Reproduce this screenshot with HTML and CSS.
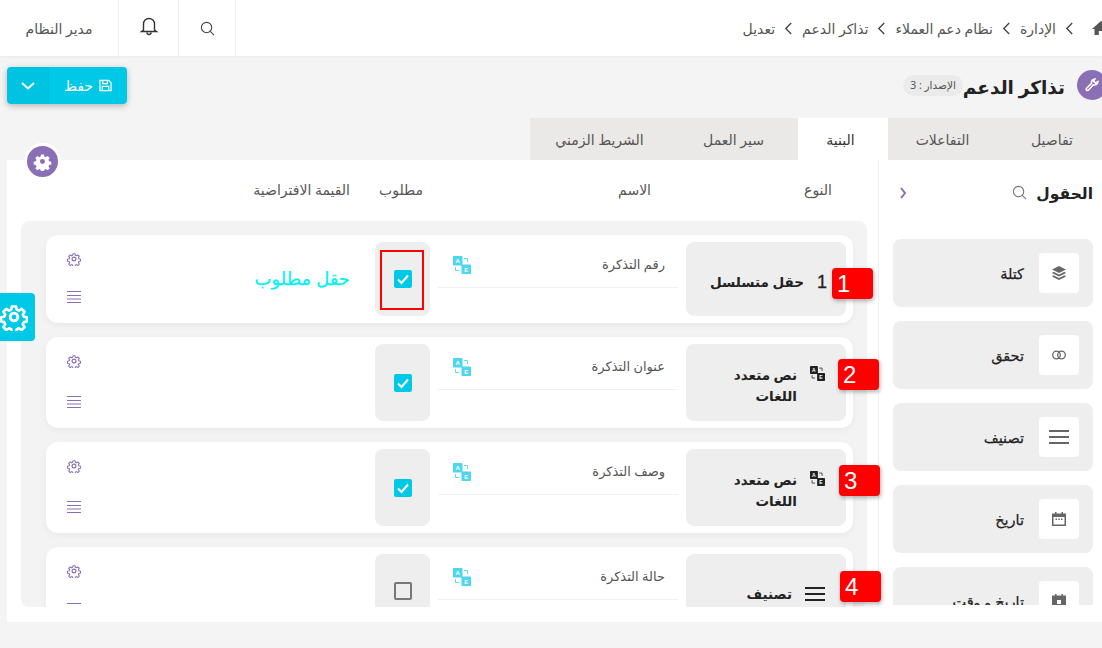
FILE: index.html
```html
<!DOCTYPE html>
<html lang="ar" dir="rtl">
<head>
<meta charset="utf-8">
<title>تذاكر الدعم</title>
<link rel="stylesheet" href="styles.css">
</head>
<body>
<svg class="defs" aria-hidden="true">
  <symbol id="i-gear" viewBox="0 0 24 24"><path fill="none" stroke="currentColor" stroke-linejoin="round" d="M10 2h4l.6 3 2.100.9 2.600-1.700 2.800 2.800-1.700 2.600.9 2.100 3 .6v4l-3 .6-.9 2.100 1.700 2.600-2.800 2.800-2.600-1.700-2.100.9-.6 3h-4l-.6-3-2.100-.9-2.600 1.700-2.800-2.800 1.700-2.600-.9-2.100-3-.6v-4l3-.6.9-2.100-1.700-2.600 2.800-2.800 2.600 1.700 2.100-.9z" transform="translate(1.200 1.200) scale(.9)"/><circle cx="12" cy="12" r="3.300" fill="none" stroke="currentColor"/></symbol>
  <symbol id="i-gear-solid" viewBox="0 0 24 24"><path fill="currentColor" fill-rule="evenodd" d="M10 2h4l.6 3 2.100.9 2.600-1.700 2.800 2.800-1.700 2.600.9 2.100 3 .6v4l-3 .6-.9 2.100 1.700 2.600-2.800 2.800-2.600-1.700-2.100.9-.6 3h-4l-.6-3-2.100-.9-2.600 1.700-2.800-2.800 1.700-2.600-.9-2.100-3-.6v-4l3-.6.9-2.100-1.700-2.600 2.800-2.800 2.600 1.700 2.100-.9zM12 8.500a3.500 3.500 0 1 0 0 7 3.500 3.500 0 0 0 0-7z" transform="translate(1.200 1.200) scale(.9)"/></symbol>
  <symbol id="i-lines" viewBox="0 0 14 12"><path stroke="currentColor" stroke-width="1" fill="none" d="M0 .5h14M0 4.500h14M0 8h14M0 11.500h14"/></symbol>
  <symbol id="i-bars" viewBox="0 0 20 16"><path stroke="currentColor" stroke-width="2.200" fill="none" d="M0 2h20M0 8h20M0 14h20"/></symbol>
  <symbol id="i-check" viewBox="0 0 18 18"><path fill="none" stroke="#fff" stroke-width="2" d="M4 9.500l3.500 3.500L14 5.500"/></symbol>
  <symbol id="i-search" viewBox="0 0 16 16"><circle cx="7" cy="7" r="5.500" fill="none" stroke="currentColor" stroke-width="1.200"/><path d="M11 11l4 4" stroke="currentColor" stroke-width="1.200"/></symbol>
  <symbol id="i-chev" viewBox="0 0 10 16"><path d="M2 2l6 6-6 6" fill="none" stroke="currentColor" stroke-width="1.500"/></symbol>
  <symbol id="i-trans" viewBox="0 0 18 18"><rect x="0" y="0" width="9.500" height="9.500" rx=".8" fill="currentColor"/><rect x="8.500" y="8.500" width="9.500" height="9.500" rx=".8" fill="currentColor"/><text x="4.700" y="7" class="svg-letter" text-anchor="middle">A</text><text x="13.200" y="15.500" class="svg-letter" text-anchor="middle">E</text><path d="M11 2.500h3.500V6M2.500 11v3.500H6" fill="none" stroke="currentColor" stroke-width=".9"/></symbol>
</svg>

<header class="topbar">
  <nav class="crumbs">
    <svg class="home" viewBox="0 0 18 14"><path fill="#555" d="M9 0l3 2.600V1h2.500v3.800L18 8h-2.500v6h-4.300v-4H6.800v4H2.500V8H0z"/></svg>
    <svg class="chev"><use href="#i-chev"/></svg><span>الإدارة</span>
    <svg class="chev"><use href="#i-chev"/></svg><span>نظام دعم العملاء</span>
    <svg class="chev"><use href="#i-chev"/></svg><span>تذاكر الدعم</span>
    <svg class="chev"><use href="#i-chev"/></svg><span>تعديل</span>
  </nav>
  <div class="tools">
    <div class="tool tool-search"><svg class="ic16"><use href="#i-search"/></svg></div>
    <div class="tool tool-bell"><svg class="bell" viewBox="0 0 20 20"><path fill="none" stroke="#333" stroke-width="1.400" d="M4.500 14V8a5.500 5.500 0 0 1 11 0v6l2 1.500h-15zM8 16.500a2 2 0 0 0 4 0"/></svg></div>
    <div class="tool tool-user">مدير النظام</div>
  </div>
</header>

<section class="pagehead">
  <div class="title-wrap">
    <span class="title-icon"><svg viewBox="0 0 16 16"><path fill="none" stroke="#fff" stroke-width="1.500" d="M14 4.500a3.500 3.500 0 0 1-4.700 3.300L4.500 13a1.300 1.300 0 0 1-2-1.800l5-4.800A3.500 3.500 0 0 1 11 2L9.500 4.300l2 1.700z"/></svg></span>
    <h1>تذاكر الدعم</h1>
    <span class="version">الإصدار : 3</span>
  </div>
  <div class="save">
    <button class="save-main"><svg viewBox="0 0 14 14"><path fill="none" stroke="#fff" stroke-width="1.300" d="M1 1.500h9.500L13 4v8.500H1zM4 1.500v3.500h5V1.500M3.500 12.500V8h7v4.500"/></svg>حفظ</button>
    <button class="save-more"><svg viewBox="0 0 14 8"><path fill="none" stroke="#fff" stroke-width="2" d="M1 1l6 5.500L13 1"/></svg></button>
  </div>
</section>

<div class="tabs">
  <a class="tab tab-a">تفاصيل</a>
  <a class="tab tab-b">التفاعلات</a>
  <a class="tab tab-c active">البنية</a>
  <a class="tab tab-d">سير العمل</a>
  <a class="tab tab-e">الشريط الزمني</a>
</div>

<main class="panel">
  <aside class="fields">
    <div class="fields-head">
      <h2>الحقول</h2>
      <svg class="ic15"><use href="#i-search"/></svg>
      <svg class="fold" viewBox="0 0 8 12"><path d="M2 1l4 5-4 5" fill="none" stroke="#8b6fb5" stroke-width="2"/></svg>
    </div>
    <div class="field"><span class="field-ic"><svg viewBox="0 0 14 14"><path fill="#666" d="M7 0l7 3.500L7 7 0 3.500zM1.500 5.800L7 8.500l5.500-2.700L14 7l-7 3.500L0 7zM1.500 9.300L7 12l5.500-2.700L14 10.500 7 14 0 10.500z"/></svg></span>كتلة</div>
    <div class="field"><span class="field-ic"><svg viewBox="0 0 14 10"><circle cx="4.500" cy="5" r="3.800" fill="none" stroke="#666" stroke-width="1.300"/><circle cx="9.500" cy="5" r="3.800" fill="none" stroke="#666" stroke-width="1.300"/></svg></span>تحقق</div>
    <div class="field"><span class="field-ic"><svg class="wide" viewBox="0 0 20 16"><use href="#i-bars"/></svg></span>تصنيف</div>
    <div class="field"><span class="field-ic"><svg viewBox="0 0 14 14"><path fill="#666" fill-rule="evenodd" d="M3 0h1.500v1.500h5V0H11v1.500h3V14H0V1.500h3zM1.500 5v7.500h11V5z"/><path fill="#666" d="M3.500 6.500h1.500V8H3.500zM6.300 6.500h1.500V8H6.300zM9 6.500h1.500V8H9z"/></svg></span>تاريخ</div>
    <div class="field"><span class="field-ic"><svg viewBox="0 0 14 14"><path fill="#666" d="M3 0h1.500v1.500h5V0H11v1.500h3V14H0V1.500h3z"/><path fill="#fff" d="M5 6h4v4H5z"/></svg></span>تاريخ و وقت</div>
  </aside>

  <section class="structure">
    <div class="cols">
      <span class="col-type">النوع</span>
      <span class="col-name">الاسم</span>
      <span class="col-req">مطلوب</span>
      <span class="col-def">القيمة الافتراضية</span>
    </div>
    <div class="list">
      <article class="row">
        <div class="type"><span class="type-num">1</span><span class="type-text">حقل متسلسل</span></div>
        <div class="name"><span>رقم التذكرة</span><svg class="trans"><use href="#i-trans"/></svg></div>
        <div class="req"><span class="box on"><svg><use href="#i-check"/></svg></span><span class="req-mark"></span></div>
        <div class="def"><span class="note">حقل مطلوب</span><div class="acts"><svg class="act"><use href="#i-gear"/></svg><svg class="act lines"><use href="#i-lines"/></svg></div></div>
      </article>
      <article class="row">
        <div class="type"><svg class="type-ic"><use href="#i-trans"/></svg><span class="type-text narrow">نص متعدد اللغات</span></div>
        <div class="name"><span>عنوان التذكرة</span><svg class="trans"><use href="#i-trans"/></svg></div>
        <div class="req"><span class="box on"><svg><use href="#i-check"/></svg></span></div>
        <div class="def"><div class="acts"><svg class="act"><use href="#i-gear"/></svg><svg class="act lines"><use href="#i-lines"/></svg></div></div>
      </article>
      <article class="row">
        <div class="type"><svg class="type-ic"><use href="#i-trans"/></svg><span class="type-text narrow">نص متعدد اللغات</span></div>
        <div class="name"><span>وصف التذكرة</span><svg class="trans"><use href="#i-trans"/></svg></div>
        <div class="req"><span class="box on"><svg><use href="#i-check"/></svg></span></div>
        <div class="def"><div class="acts"><svg class="act"><use href="#i-gear"/></svg><svg class="act lines"><use href="#i-lines"/></svg></div></div>
      </article>
      <article class="row">
        <div class="type"><svg class="type-bars"><use href="#i-bars"/></svg><span class="type-text">تصنيف</span></div>
        <div class="name"><span>حالة التذكرة</span><svg class="trans"><use href="#i-trans"/></svg></div>
        <div class="req"><span class="box"></span></div>
        <div class="def"><div class="acts"><svg class="act"><use href="#i-gear"/></svg><svg class="act lines"><use href="#i-lines"/></svg></div></div>
      </article>
    </div>
  </section>

  <span class="mark mark-1">1</span>
  <span class="mark mark-2">2</span>
  <span class="mark mark-3">3</span>
  <span class="mark mark-4">4</span>
  <span class="gear-float"><svg><use href="#i-gear-solid"/></svg></span>
</main>

<span class="side-tab"><svg><use href="#i-gear"/></svg></span>
</body>
</html>
```

FILE: styles.css
```css
* { box-sizing: border-box; }
html, body { margin: 0; height: 648px; overflow: hidden; }
body {
  position: relative;
  background: #f4f4f4;
  color: #333;
  font-family: "Noto Sans", "DejaVu Sans", sans-serif;
  font-size: 13px;
}
.defs { display: none; }
svg { display: block; }
.svg-letter { font: 700 6px "Liberation Sans", sans-serif; fill: #fff; }

.topbar {
  height: 56px;
  background: #fff;
  display: flex;
  justify-content: space-between;
  align-items: stretch;
  box-shadow: 0 1px 3px rgba(0,0,0,.04);
}
.crumbs { display: flex; align-items: center; gap: 9px; margin-right: -8px; color: #555; font-size: 14px; }
.home { width: 18px; height: 14px; margin-left: 9px; margin-top: -1px; }
.chev { width: 9px; height: 15px; transform: scaleX(-1); color: #444; }
.tools { display: flex; }
.tool { display: flex; align-items: center; justify-content: center; border-right: 1px solid #eee; color: #444; }
.tool-search { width: 57px; }
.tool-bell { width: 60px; }
.tool-user { width: 119px; color: #555; font-size: 14px; }
.ic16 { width: 15px; height: 15px; }
.bell { width: 20px; height: 20px; margin-top: -4px; }

.pagehead {
  height: 62px;
  display: flex;
  justify-content: space-between;
  padding: 11px 0 0 7px;
}
.title-wrap { display: flex; align-items: flex-start; margin-right: -5px; }
.title-icon { width: 30px; height: 30px; border-radius: 50%; background: #8b6fb5; margin-top: 3px; display: flex; align-items: center; justify-content: center; }
.title-icon svg { width: 16px; height: 16px; }
h1 { margin: 2px 12px 0 0; font-size: 18.500px; line-height: 36px; font-weight: 700; color: #222; }
.version { margin-top: 8px; height: 21px; padding: 0 7px; border-radius: 11px; background: #ebebeb; font-size: 10.500px; line-height: 21px; color: #555; white-space: nowrap; }
.save { display: flex; direction: rtl; height: 37px; border-radius: 4px; overflow: hidden; box-shadow: 0 2px 6px rgba(0,0,0,.25); }
.save button { border: 0; background: #00c9e8; color: #fff; font: inherit; font-size: 14px; display: flex; align-items: center; justify-content: center; padding: 0; }
.save-main { width: 78px; gap: 6px; }
.save-main svg { width: 13px; height: 13px; }
.save-more { width: 42px; box-shadow: inset -1px 0 0 rgba(0,0,0,.04); background: #00c3e2 !important; }
.save-more svg { width: 14px; height: 8px; }

.tabs { height: 42px; display: flex; width: 572px; background: #ebe9e7; font-size: 14px; }
.tab { display: flex; align-items: center; justify-content: center; color: #555; padding-right: 5px; }
.tab-a { width: 100px; padding-right: 0; }
.tab-b { width: 114px; }
.tab-c { width: 90px; }
.tab-d { width: 124px; }
.tab-e { width: 144px; }
.tab.active { background: #fff; color: #333; }

.panel {
  position: relative;
  margin-left: 7px;
  height: 462px;
  background: #fff;
  display: flex;
  align-items: flex-start;
}
.fields {
  width: 224px;
  height: 445px;
  overflow: hidden;
  flex: none;
  padding: 0 9px 0 14px;
  border-left: 1px solid #eee;
}
.fields-head { height: 79px; display: flex; align-items: center; padding-bottom: 14px; color: #777; }
.fields-head h2 { margin: 0 0 0 9px; font-size: 15.500px; font-weight: 700; color: #222; }
.ic15 { width: 15px; height: 15px; }
.fold { width: 8px; height: 12px; margin-right: auto; margin-left: 6px; }
.field {
  height: 68px;
  margin-bottom: 14px;
  padding-right: 14px;
  background: #eee;
  border-radius: 8px;
  display: flex;
  align-items: center;
  gap: 15px;
  font-size: 14.500px;
  -webkit-text-stroke: .25px #222;
  color: #222;
}
.field-ic { width: 40px; height: 40px; background: #fff; border-radius: 4px; display: flex; align-items: center; justify-content: center; color: #666; }
.field-ic svg { width: 14px; height: 14px; }
.field-ic svg.wide { width: 20px; height: 16px; }

.structure { flex: 1; min-width: 0; padding: 0 11px 0 14px; }
.cols { height: 61px; position: relative; color: #555; font-size: 14px; }
.cols span { position: absolute; top: 20px; white-space: nowrap; }
.col-type { right: 35px; }
.col-name { right: 216px; }
.col-req { right: 444px; }
.col-def { right: 517px; }
.list {
  height: 386px;
  overflow: hidden;
  background: #f3f3f3;
  border-radius: 8px;
  padding: 14px 14px 0 25px;
  display: flex;
  flex-direction: column;
  gap: 14px;
}
.row {
  flex: none;
  display: grid;
  grid-template-columns: 160px 240px 55px 1fr;
  gap: 8px;
  padding: 7px;
  background: #fff;
  border-radius: 12px;
  box-shadow: 0 2px 6px rgba(0,0,0,.05);
}
.type {
  min-height: 74px;
  padding: 20.500px 19px 14.500px 8px;
  background: #eee;
  border-radius: 8px;
  display: flex;
  align-items: center;
  gap: 13px;
  font-weight: 700;
  color: #222;
  line-height: 21px;
}
.type-num { font-family: "Liberation Sans", sans-serif; font-size: 18px; font-weight: 400; -webkit-text-stroke: .3px #222; }
.type-text { font-size: 13.500px; }
.type-text.narrow { width: 90px; }
.type-ic { width: 15px; height: 15px; align-self: flex-start; margin-top: 1px; margin-right: 2px; color: #222; }
.type-bars { width: 20px; height: 16px; color: #222; margin-right: 2px; }
.name {
  height: 46px;
  padding: 0 13px 2px 0;
  display: flex;
  justify-content: space-between;
  align-items: center;
  border-bottom: 1px solid #f0f0f0;
  color: #555;
}
.trans { width: 18px; height: 18px; margin-left: 15px; margin-top: 2px; color: #4dd6ef; }
.req {
  position: relative;
  background: #eee;
  border-radius: 8px;
  display: flex;
  align-items: center;
  justify-content: center;
}
.box { width: 18px; height: 18px; border: 2px solid #777; border-radius: 2px; }
.box.on { background: #00c9e8; border: 0; }
.box.on svg { width: 18px; height: 18px; }
.req-mark { position: absolute; top: 8px; left: 5px; width: 44px; height: 60px; border: 2px solid #f00; }
.def { display: flex; align-items: center; justify-content: space-between; padding: 0 17px 0 0; }
.note { font-family: "Liberation Sans", "DejaVu Sans", sans-serif; font-size: 18px; color: #00f2f2; -webkit-text-stroke: .25px #00f2f2; }
.acts {
  align-self: stretch;
  margin-right: auto;
  margin-left: 14px;
  padding: 10px 0 13px;
  display: flex;
  flex-direction: column;
  justify-content: space-between;
  color: #8b6fb5;
  stroke-width: 2;
}
.act { width: 14px; height: 14px; }
.act.lines { height: 12px; }

.mark {
  position: absolute;
  width: 41px;
  height: 31px;
  padding-left: 5px;
  background: #f00;
  border-radius: 4px;
  color: #fff;
  font: 24px/31px "Liberation Sans", sans-serif;
  text-align: left;
  box-shadow: 1px 2px 4px rgba(0,0,0,.3);
}
.mark-1 { top: 108px; left: 825px; }
.mark-2 { top: 199px; left: 831px; }
.mark-3 { top: 305px; left: 832px; }
.mark-4 { top: 411px; left: 833px; }
.gear-float {
  position: absolute;
  top: -17px;
  left: 17px;
  width: 37px;
  height: 37px;
  border: 3px solid #fff;
  border-radius: 50%;
  background: #8b6fb5;
  display: flex;
  align-items: center;
  justify-content: center;
  color: #fff;
}
.gear-float svg { width: 19px; height: 19px; }
.side-tab {
  position: absolute;
  top: 293px;
  left: 0;
  width: 35px;
  height: 48px;
  background: #00c9e8;
  border-radius: 0 4px 4px 0;
  color: #fff;
  display: flex;
  align-items: center;
  justify-content: flex-end;
  stroke-width: 2.500;
}
.side-tab svg { width: 28px; height: 28px; }
```
